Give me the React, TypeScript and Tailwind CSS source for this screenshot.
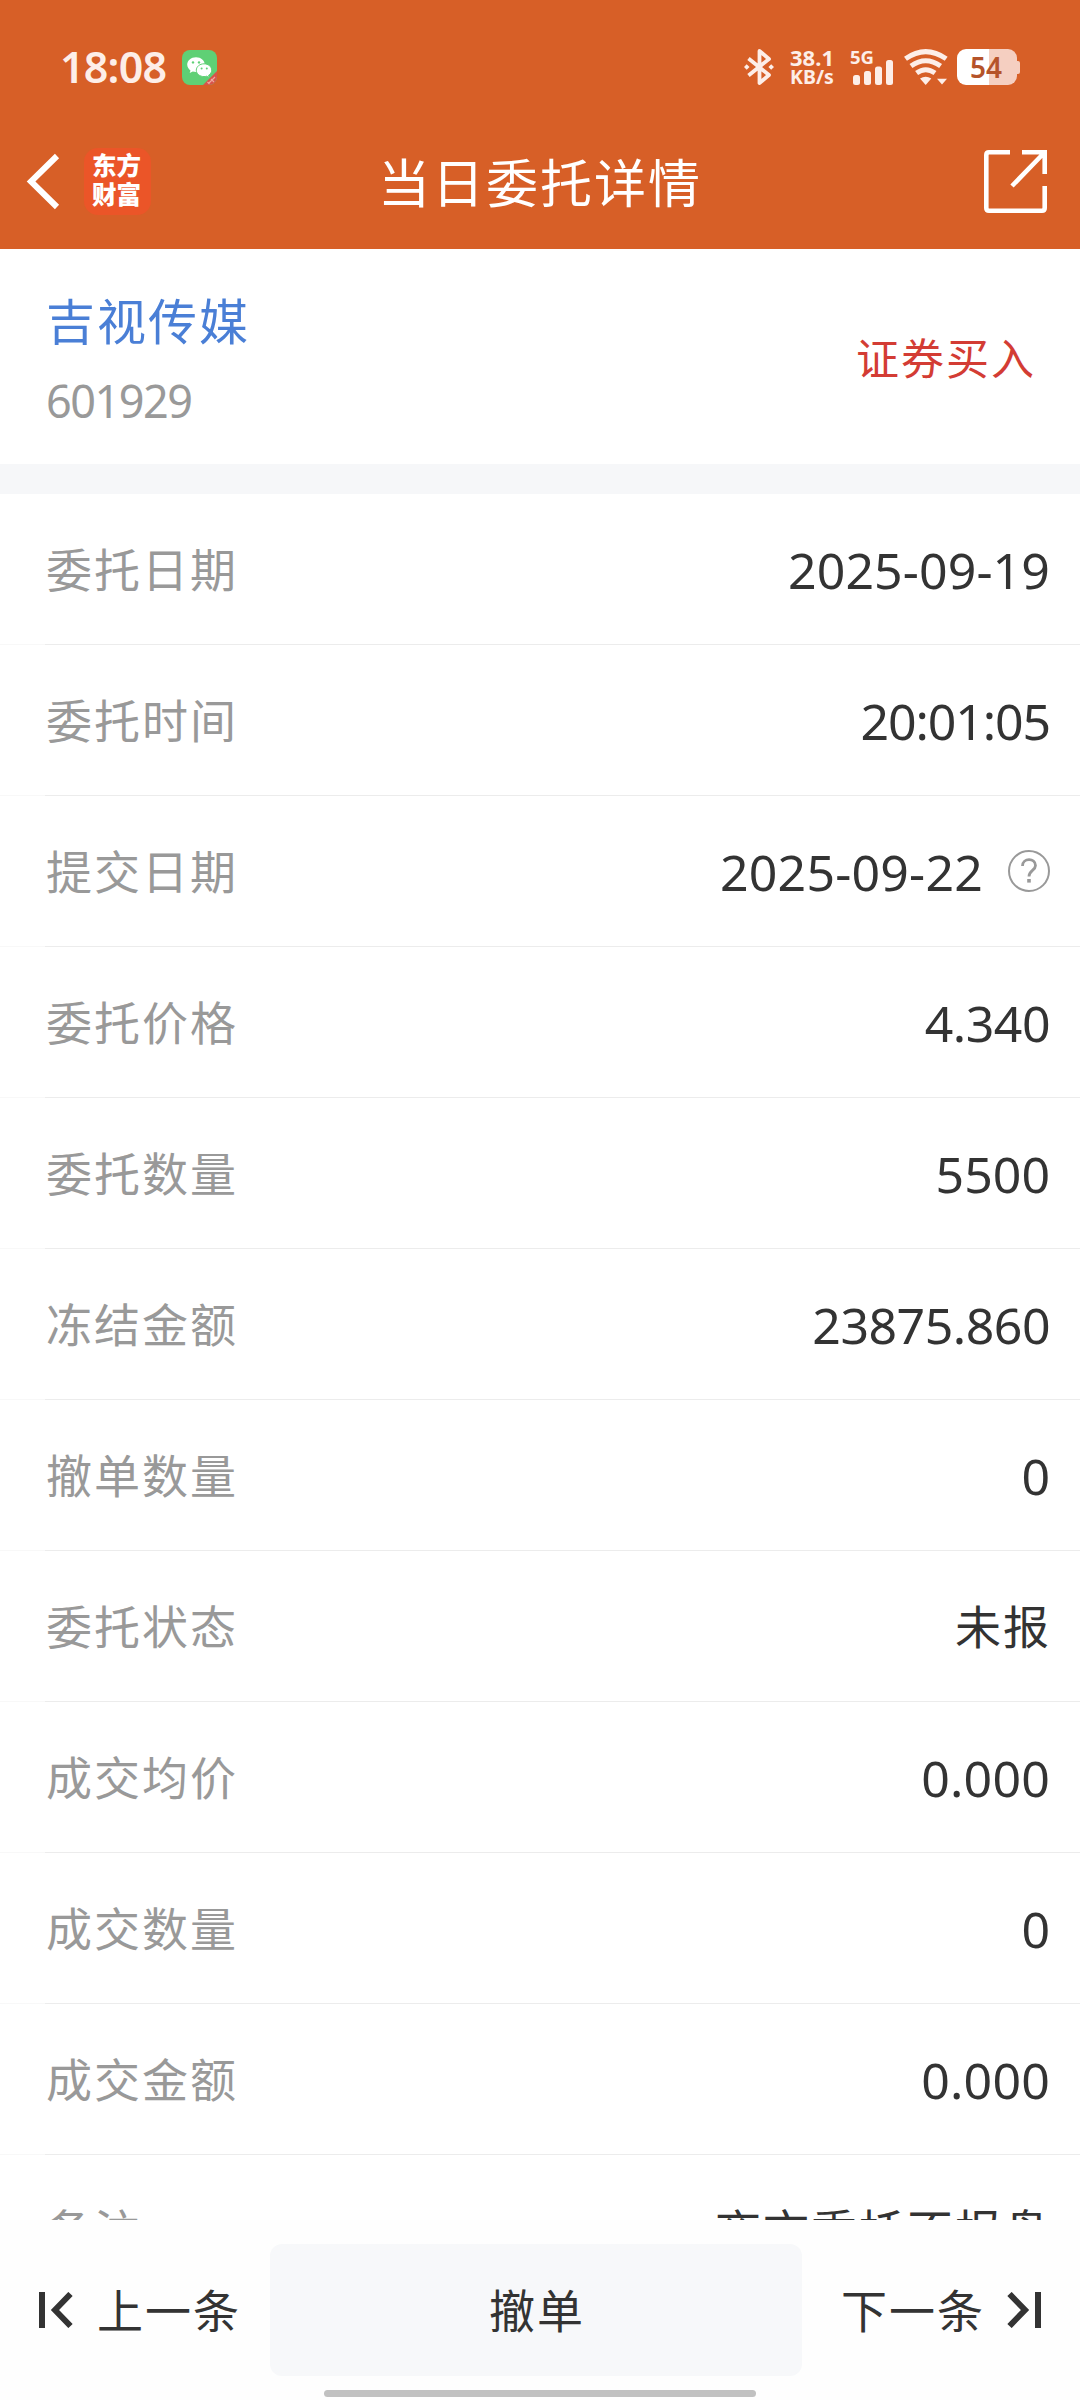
const ROWS = [
  { label: "委托日期", value: "2025-09-19", spacing: "tracking-[0.1px]" },
  { label: "委托时间", value: "20:01:05", spacing: "tracking-[-1.1px]" },
  { label: "提交日期", value: "2025-09-22", spacing: "tracking-[0.2px]", help: true },
  { label: "委托价格", value: "4.340", spacing: "tracking-[-0.5px]" },
  { label: "委托数量", value: "5500", spacing: "tracking-[0px]" },
  { label: "冻结金额", value: "23875.860", spacing: "tracking-[-0.5px]" },
  { label: "撤单数量", value: "0", spacing: "tracking-[0px]" },
  { label: "委托状态", value: "未报", cjk: true },
  { label: "成交均价", value: "0.000", spacing: "tracking-[0.2px]" },
  { label: "成交数量", value: "0", spacing: "tracking-[0px]" },
  { label: "成交金额", value: "0.000", spacing: "tracking-[0.2px]" },
  { label: "备注", value: "夜市委托不报盘", cjk: true },
];

const WechatBadge = () => (
  <svg className="ml-[16px] size-[35px]" viewBox="0 0 35 35">
    <defs>
      <clipPath id="badge">
        <rect width="35" height="35" rx="8" />
      </clipPath>
    </defs>
    <g clipPath="url(#badge)">
      <rect width="35" height="35" fill="#5fd075" />
      <path d="M35 21 L21 35 H35 Z" fill="#d9534a" />
      <path d="M27 33 l6 -6 M25.5 32 l2 2 M29 29 l3 3" stroke="#f0a79f" strokeWidth="1.2" />
    </g>
    <path d="M14 7.2c-5 0-8.8 3.3-8.8 7.4 0 2.4 1.3 4.4 3.3 5.8l-.8 2.7 3.1-1.6c1 .3 2.1.4 3.2.4 5 0 8.8-3.3 8.8-7.3S19 7.2 14 7.2z" fill="#fff" />
    <path d="M22 13.8c-4.3 0-7.7 2.9-7.7 6.4s3.4 6.4 7.7 6.4c.9 0 1.8-.1 2.6-.4l2.7 1.4-.7-2.3c1.9-1.2 3.1-3 3.1-5.1 0-3.5-3.4-6.4-7.7-6.4z" fill="#fff" stroke="#5fd075" strokeWidth="1" />
    <circle cx="11" cy="12.4" r="1.2" fill="#5fd075" />
    <circle cx="17" cy="12.4" r="1.2" fill="#5fd075" />
    <circle cx="19.6" cy="18.4" r="1" fill="#5fd075" />
    <circle cx="24.8" cy="18.4" r="1" fill="#5fd075" />
  </svg>
);

const Bluetooth = () => (
  <svg className="h-[36px] w-[30px]" viewBox="0 0 30 36" fill="none" stroke="#fdeee8" strokeWidth="3.8" strokeLinejoin="round">
    <path d="M4.5 9.5 L25 26 L15.5 34 V2 L25 10 L4.5 26.5" />
    <path d="M2.7 15.2l2.8 2.8-2.8 2.8L-.1 18zM27.2 15.2l2.8 2.8-2.8 2.8-2.8-2.8z" fill="#fdeee8" stroke="none" />
  </svg>
);

const SignalBars = () => (
  <svg className="h-[25px] w-[40px]" viewBox="0 0 40 25" fill="#fdeee8">
    <rect x="0" y="15" width="7" height="10" rx="2.5" />
    <rect x="11" y="11" width="7" height="14" rx="2.5" />
    <rect x="22" y="6.5" width="7" height="18.5" rx="2.5" />
    <rect x="33" y="0" width="7" height="25" rx="2.5" />
  </svg>
);

const Wifi = () => (
  <svg className="ml-[11px] h-[36px] w-[44px]" viewBox="0 0 44 36" fill="none" stroke="#fdeee8" strokeWidth="5">
    <path d="M1.5 9.8 Q21.7 -4.6 42.2 9.8" />
    <path d="M7 17 Q21.7 6.6 36.6 17" />
    <path d="M12.6 24 Q21.7 17.4 31 24" />
    <path d="M16 29.5 Q21.7 26 27.3 29.5 L21.7 36zM33 29.8 h10 l-5 5.6z" fill="#fdeee8" stroke="none" />
  </svg>
);

const Battery = () => (
  <div className="ml-[9px] flex items-center">
    <div className="flex h-[36px] w-[60px] items-center justify-center rounded-[9px] bg-[linear-gradient(90deg,#fff_32px,#f5cfc1_32px)] pr-[2px] font-['Noto_Sans'] text-[28px] leading-none font-semibold text-[#b5532a]">
      54
    </div>
    <div className="h-[13px] w-[3px] rounded-r-[2px] bg-[#f5cfc1]" />
  </div>
);

const StatusBar = () => (
  <div className="flex h-[134px] items-center px-[60px] text-[#fdeee8]">
    <span className="-mt-[2px] w-[106px] font-['Noto_Sans'] text-[43px] leading-none font-semibold tracking-[-0.8px] whitespace-nowrap">
      18:08
    </span>
    <WechatBadge />
    <div className="ml-auto flex items-center">
      <Bluetooth />
      <div className="ml-[16px] flex w-[44px] flex-col items-center font-['Noto_Sans'] leading-[20px] font-bold whitespace-nowrap">
        <span className="text-[22px]">38.1</span>
        <span className="text-[19.5px]">KB/s</span>
      </div>
      <div className="ml-[17px] flex h-[36px] flex-col">
        <span className="-ml-[1px] h-[11px] font-['Noto_Sans'] text-[18.5px] leading-[15px] font-bold">5G</span>
        <div className="ml-[2px]">
          <SignalBars />
        </div>
      </div>
      <Wifi />
      <Battery />
    </div>
  </div>
);

const TitleBar = () => (
  <div className="grid h-[115px] grid-cols-[1fr_auto_1fr] pl-[26px] pr-[33px]">
    <div className="flex items-start pt-[14px]">
      <svg className="mt-[4px] h-[58px] w-[36px]" viewBox="0 0 36 58" fill="none" stroke="#fff" strokeWidth="6">
        <path d="M31 4 L5 29.5 L31 55" />
      </svg>
      <div className="ml-[22px] flex size-[67px] flex-col items-center justify-center rounded-[14px] bg-[#eb5528] pr-[2px] pb-[5px] font-['Noto_Sans_CJK_SC'] text-[24.5px] leading-[29px] font-black text-white">
        <span>东方</span>
        <span>财富</span>
      </div>
    </div>
    <h1 className="pt-[15px] pl-[7px] text-[52px] leading-[64px] tracking-[2px] text-white">当日委托详情</h1>
    <svg className="mt-[16px] size-[63px] justify-self-end" viewBox="0 0 63 63" fill="none" stroke="#fff" strokeWidth="4.6">
      <path d="M26 2.3 H5 Q2.3 2.3 2.3 5 V58 Q2.3 60.7 5 60.7 H58 Q60.7 60.7 60.7 58 V36" />
      <path d="M38 2.3 H60.7 V24 M60 3 L28 36" />
    </svg>
  </div>
);

const StockHeader = () => (
  <section className="flex h-[215px] items-center justify-between pr-[44px] pl-[46px]">
    <div className="pt-[4px]">
      <div className="text-[49px] leading-[66px] tracking-[2px] text-[#4a7fd6]">吉视传媒</div>
      <div className="mt-[19px] font-['Noto_Sans'] text-[45px] leading-[60px] tracking-[-1.5px] text-[#999]">601929</div>
    </div>
    <div className="text-[43px] leading-none tracking-[2px] text-[#d33c34]">证券买入</div>
  </section>
);

const HelpIcon = () => (
  <svg className="-mt-[1px] ml-[25px] size-[42px]" viewBox="0 0 42 42" fill="none" stroke="#999">
    <circle cx="21" cy="21" r="20" strokeWidth="2" />
    <path d="M14.5 16 C14.5 7.5 27.5 7.5 27.5 15.5 C27.5 20.5 21 20.5 21 26.5" strokeWidth="2.8" />
    <path d="M21 29 v3.6" strokeWidth="3.6" />
  </svg>
);

const DetailRow = ({ row }: { row: (typeof ROWS)[number] }) => (
  <div className="flex h-[151px] shrink-0 flex-col">
    <div className="flex flex-1 items-center justify-between pr-[30px] pl-[46px]">
      <span className="pb-[4px] text-[46px] leading-none tracking-[2px] text-[#999]">{row.label}</span>
      <div className="flex items-center text-[#333]">
        {row.cjk ? (
          <span className="-mr-[1px] pb-[4px] text-[46px] leading-none tracking-[2px]">{row.value}</span>
        ) : (
          <span className={`pt-[2px] font-['Noto_Sans'] text-[50px] leading-none ${row.spacing}`}>{row.value}</span>
        )}
        {row.help && <HelpIcon />}
      </div>
    </div>
    <div className="flex h-px">
      <div className="w-[45px] bg-[#f8f8f8]" />
      <div className="flex-1 bg-[#ececec]" />
    </div>
  </div>
);

const BottomBar = () => (
  <footer className="flex h-[180px] flex-col bg-[#fefefe] pt-[24px]">
    <div className="flex h-[132px] items-center text-[46px] leading-none tracking-[2px] text-[#333]">
      <div className="flex w-[270px] items-center pl-[39px]">
        <svg className="h-[36px] w-[34px]" viewBox="0 0 34 36" fill="none" stroke="#333" strokeWidth="6">
          <path d="M3 0 V36 M31.5 2 L16 18 L31.5 34" />
        </svg>
        <span className="ml-[24px] pb-[4px]">上一条</span>
      </div>
      <button className="h-full w-[532px] rounded-[12px] bg-[#f7f8fa] pb-[4px] pl-[2px] tracking-[2px]">撤单</button>
      <div className="flex flex-1 items-center justify-end pr-[39px]">
        <span className="mr-[22px] pb-[4px]">下一条</span>
        <svg className="h-[36px] w-[34px]" viewBox="0 0 34 36" fill="none" stroke="#333" strokeWidth="6">
          <path d="M31 0 V36 M2.5 2 L18 18 L2.5 34" />
        </svg>
      </div>
    </div>
    <div className="mt-[14px] h-[7px] w-[432px] self-center rounded-full bg-[#c1c1c1]" />
  </footer>
);

const App = () => (
  <div className="flex h-[2400px] w-[1080px] flex-col overflow-hidden bg-white font-['Noto_Sans_CJK_SC',sans-serif]">
    <header className="bg-[#d75f27]">
      <StatusBar />
      <TitleBar />
    </header>
    <StockHeader />
    <div className="h-[30px] shrink-0 bg-[#f6f7f9]" />
    <main className="flex min-h-0 flex-1 flex-col overflow-hidden">
      {ROWS.map((row) => (
        <DetailRow key={row.label} row={row} />
      ))}
    </main>
    <BottomBar />
  </div>
);

export default App;
